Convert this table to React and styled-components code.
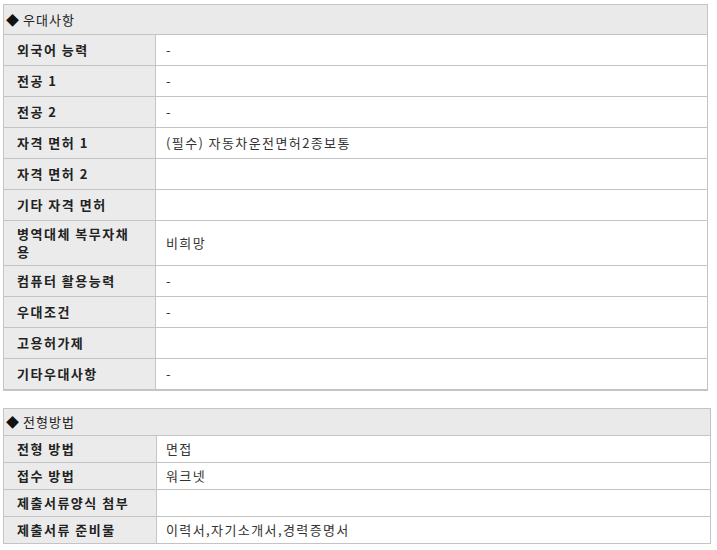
import React from "react";
import styled, { createGlobalStyle } from "styled-components";

const Global = createGlobalStyle`
  html, body { margin: 0; padding: 0; background: #fff; }
  body {
    font-family: "Noto Sans CJK KR", "Noto Sans", sans-serif;
    font-size: 13px;
    color: #333;
  }
`;

const Page = styled.div`
  display: flex;
  flex-direction: column;
  gap: 17px;
  padding: 4px 0 0 3px;
`;

const Table = styled.div`
  width: ${(p) => p.$width}px;
  box-sizing: border-box;
  border: 1px solid #c4c4c4;
  border-bottom-width: ${(p) => p.$bottom}px;
  background: #fff;
`;

const Header = styled.div`
  display: flex;
  align-items: center;
  gap: 4px;
  height: ${(p) => p.$h}px;
  padding-left: 2px;
  background: #eaeaea;
  border-bottom: 1px solid #c4c4c4;
  color: #222;
  line-height: 18px;
  letter-spacing: 1px;
`;

const Diamond = styled.span`
  font-size: 13px;
  color: #111;
  letter-spacing: 0;
`;

const Row = styled.div`
  display: grid;
  grid-template-columns: ${(p) => p.$label}px 1fr;
  min-height: ${(p) => p.$h}px;
  border-bottom: 1px solid #c4c4c4;
  &:last-child { border-bottom: none; }
`;

const Label = styled.div`
  display: flex;
  align-items: center;
  box-sizing: border-box;
  padding: 4px 20px 4px 13px;
  background: #ebebeb;
  border-right: 1px solid #c4c4c4;
  font-weight: 700;
  color: #222;
  line-height: 18px;
  letter-spacing: 1.5px;
  word-break: break-all;
`;

const Value = styled.div`
  display: flex;
  align-items: center;
  padding: 4px ${(p) => p.$pl}px;
  color: #333;
  line-height: 18px;
  letter-spacing: 1.4px;
`;

const pref = [
  ["외국어 능력", "-"],
  ["전공 1", "-"],
  ["전공 2", "-"],
  ["자격 면허 1", "(필수) 자동차운전면허2종보통"],
  ["자격 면허 2", ""],
  ["기타 자격 면허", ""],
  ["병역대체 복무자채용", "비희망"],
  ["컴퓨터 활용능력", "-"],
  ["우대조건", "-"],
  ["고용허가제", ""],
  ["기타우대사항", "-"],
];

const method = [
  ["전형 방법", "면접"],
  ["접수 방법", "워크넷"],
  ["제출서류양식 첨부", ""],
  ["제출서류 준비물", "이력서,자기소개서,경력증명서"],
];

function Section({ title, rows, width, bottom, headerH, rowH, labelW, pl }) {
  return (
    <Table $width={width} $bottom={bottom}>
      <Header $h={headerH}>
        <Diamond>◆</Diamond>
        <span>{title}</span>
      </Header>
      {rows.map(([k, v]) => (
        <Row key={k} $label={labelW} $h={rowH}>
          <Label>{k}</Label>
          <Value $pl={pl}>{v}</Value>
        </Row>
      ))}
    </Table>
  );
}

export default function App() {
  return (
    <>
      <Global />
      <Page>
        <Section
          title="우대사항"
          rows={pref}
          width={705}
          bottom={2}
          headerH={29}
          rowH={30}
          labelW={152}
          pl={10}
        />
        <Section
          title="전형방법"
          rows={method}
          width={708}
          bottom={1}
          headerH={26}
          rowH={26}
          labelW={153}
          pl={9}
        />
      </Page>
    </>
  );
}
